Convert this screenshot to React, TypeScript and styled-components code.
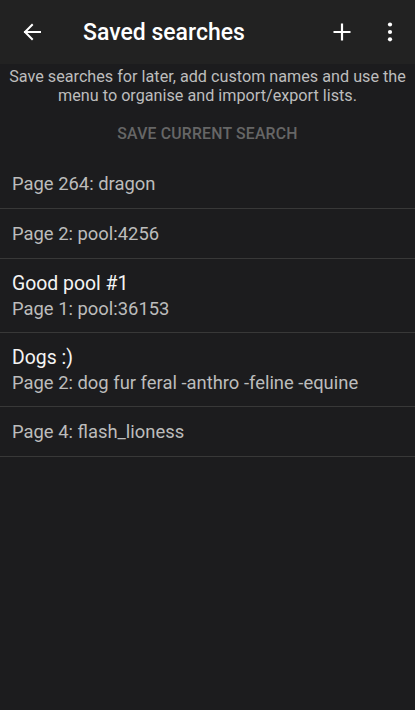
import React from "react";
import styled, { createGlobalStyle } from "styled-components";

const Global = createGlobalStyle`
  html, body { margin: 0; padding: 0; background: #1c1c1e; }
  body { font-family: Roboto, "Noto Sans", sans-serif; -webkit-font-smoothing: antialiased; }
`;

const Page = styled.div`
  width: 415px;
  min-height: 710px;
  background: #1c1c1e;
  display: flex;
  flex-direction: column;
`;

const Toolbar = styled.header`
  height: 64px;
  background: #222222;
  display: flex;
  align-items: center;
  padding: 0 1px 0 8px;
  box-sizing: border-box;
`;

const IconButton = styled.button`
  width: 48px;
  height: 48px;
  border: none;
  background: transparent;
  color: #ffffff;
  display: flex;
  align-items: center;
  justify-content: center;
  padding: 0;
`;

const Title = styled.h1`
  flex: 1;
  margin: 0 0 0 27px;
  font-size: 23px;
  font-weight: 500;
  color: #ffffff;
`;

const Description = styled.p`
  margin: 0;
  padding: 3px 4px 0;
  text-align: center;
  font-size: 16.2px;
  line-height: 19px;
  color: #bdbdbd;
`;

const SaveButton = styled.button`
  align-self: center;
  margin-top: 9px;
  height: 38px;
  border: none;
  background: transparent;
  color: #666666;
  font-family: inherit;
  font-size: 15.8px;
  font-weight: 500;
  letter-spacing: 0.2px;
  text-transform: uppercase;
`;

const List = styled.ul`
  list-style: none;
  margin: 7px 0 0;
  padding: 0;
`;

const Row = styled.li<{ $double?: boolean }>`
  height: ${(p) => (p.$double ? 73 : 49)}px;
  border-bottom: 1px solid #383838;
  padding: 0 12px;
  display: flex;
  flex-direction: column;
  justify-content: center;
`;

const RowTitle = styled.div`
  font-size: 19.4px;
  line-height: 25px;
  color: #f4f4f4;
`;

const RowQuery = styled.div`
  font-size: 18.4px;
  line-height: 25px;
  color: #bcbcbc;
`;

const items: { name?: string; query: string }[] = [
  { query: "Page 264: dragon" },
  { query: "Page 2: pool:4256" },
  { name: "Good pool #1", query: "Page 1: pool:36153" },
  { name: "Dogs :)", query: "Page 2: dog fur feral -anthro -feline -equine" },
  { query: "Page 4: flash_lioness" },
];

export default function App() {
  return (
    <Page>
      <Global />
      <Toolbar>
        <IconButton aria-label="Back">
          <svg width="24" height="24" viewBox="0 0 24 24" fill="none" stroke="currentColor" strokeWidth="2" strokeLinecap="square">
            <path d="M20 12H5" />
            <path d="M12 5l-7 7 7 7" />
          </svg>
        </IconButton>
        <Title>Saved searches</Title>
        <IconButton aria-label="Add">
          <svg width="24" height="24" viewBox="0 0 24 24" fill="none" stroke="currentColor" strokeWidth="2.2">
            <path d="M12 3.5v17M3.5 12h17" />
          </svg>
        </IconButton>
        <IconButton aria-label="More">
          <svg width="24" height="24" viewBox="0 0 24 24" fill="currentColor">
            <circle cx="12" cy="4.5" r="2.1" />
            <circle cx="12" cy="12" r="2.1" />
            <circle cx="12" cy="19.3" r="2.1" />
          </svg>
        </IconButton>
      </Toolbar>
      <Description>
        Save searches for later, add custom names and use the menu to organise and import/export lists.
      </Description>
      <SaveButton>Save current search</SaveButton>
      <List>
        {items.map((it, i) => (
          <Row key={i} $double={!!it.name}>
            {it.name && <RowTitle>{it.name}</RowTitle>}
            <RowQuery>{it.query}</RowQuery>
          </Row>
        ))}
      </List>
    </Page>
  );
}
